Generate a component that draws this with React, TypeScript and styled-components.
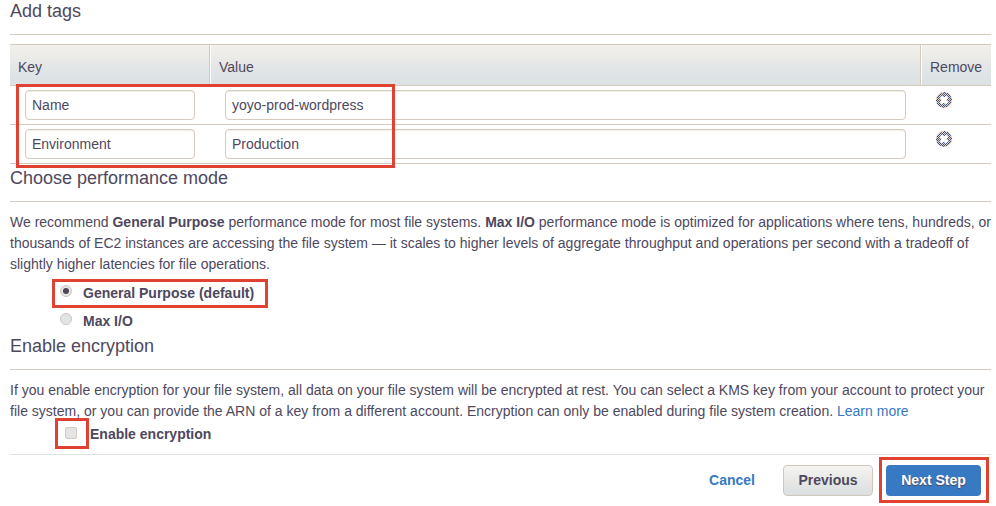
import React from "react";
import styled, { createGlobalStyle, css } from "styled-components";

const Global = createGlobalStyle`
  *, *::before, *::after { box-sizing: border-box; }
  body {
    margin: 0;
    background: #fff;
    color: #4e485e;
    font: 14px/21px "Liberation Sans", Arial, sans-serif;
    overflow: hidden;
  }
`;

const line = "#d6cabc";

const Page = styled.main`
  width: 996px;
  height: 506px;
  padding: 0 5px 0 10px;
  background: #fff;
  white-space: nowrap;
`;

const Heading = styled.h2<{ $height: number; $lineHeight: number }>`
  height: ${(p) => p.$height}px;
  margin: 0;
  border-bottom: 1px solid ${line};
  font-size: 18px;
  font-weight: 400;
  line-height: ${(p) => p.$lineHeight}px;
`;

/* Red frame drawn over a part of the form. */
const Highlight = styled.span<{ $x: number; $y: number; $w: number; $h: number }>`
  position: absolute;
  left: ${(p) => p.$x}px;
  top: ${(p) => p.$y}px;
  width: ${(p) => p.$w}px;
  height: ${(p) => p.$h}px;
  border: 3px solid #df4230;
  pointer-events: none;
`;

const Table = styled.div`
  position: relative;
  margin-top: 9px;
  border-top: 1px solid ${line};
`;

const columns = css`
  display: grid;
  grid-template-columns: 200px 711px 70px;
  border-bottom: 1px solid ${line};
`;

const HeadRow = styled.div`
  ${columns}
  height: 41px;
  background: linear-gradient(#f1f0ed, #ebebe8 30%, #dee3e6 75%, #dde1e2);
`;

const HeadCell = styled.div`
  padding: 12px 0 0 8px;
  border-left: 1px solid #fff;
  border-right: 1px solid ${line};
  &:first-child { border-left: 0; }
  &:last-child { border-right: 0; }
`;

const Row = styled.div`
  ${columns}
  height: 39px;
`;

const Cell = styled.div`
  padding: 4px 15px 0;
`;

const Field = styled.input`
  display: block;
  width: 100%;
  height: 30px;
  padding: 0 6px;
  border: 1px solid ${line};
  border-radius: 4px;
  outline: 0;
  background: #fff;
  box-shadow: inset 0 1px 1px #f0efec;
  color: inherit;
  font: inherit;
`;

const RemoveButton = styled.button`
  display: block;
  width: 18px;
  height: 18px;
  margin: 5px 0 0 14px;
  padding: 0;
  border: 0;
  background: none;
  svg { display: block; }
`;

const Paragraph = styled.p`
  margin: 10px 0 0;
`;

const TextLine = styled.span<{ $spacing?: number }>`
  display: block;
  letter-spacing: ${(p) => p.$spacing ?? 0}px;
`;

const Link = styled.a`
  color: #3779c2;
  text-decoration: none;
`;

const Options = styled.div`
  position: relative;
  height: 56px;
  padding: 4px 0 0 50px;
`;

const Option = styled.label`
  display: flex;
  height: 28px;
  gap: 11px;
  font-weight: 700;
  line-height: 28px;
`;

const EncryptionOption = styled(Option)`
  position: relative;
  height: 33px;
  padding-left: 55px;
  gap: 13px;
  line-height: 25px;
  border-bottom: 1px solid #dde2e4;
`;

const RadioMark = styled.span`
  display: grid;
  place-items: center;
  width: 12px;
  height: 12px;
  margin-top: 6px;
  border: 1px solid #cfc6ba;
  border-radius: 50%;
  background: #e2e5e5;
`;

const Dot = styled.span`
  width: 6px;
  height: 6px;
  border-radius: 50%;
  background: #514454;
`;

const CheckMark = styled.span`
  width: 12px;
  height: 12px;
  margin-top: 5px;
  border: 1px solid #d3c9bd;
  border-radius: 2px;
  background: #e3e5e5;
`;

const Actions = styled.footer`
  position: relative;
  display: flex;
  justify-content: flex-end;
  align-items: center;
  padding: 10px 10px 0 0;
`;

const Button = styled.button<{ $kind: "link" | "plain" | "primary" }>`
  height: 31px;
  padding: 0;
  border: 0;
  border-radius: 4px;
  font: 700 14px/29px "Liberation Sans", Arial, sans-serif;
  ${(p) =>
    p.$kind === "link" &&
    css`
      width: 48px;
      margin-right: 27px;
      background: none;
      color: #3779c2;
    `}
  ${(p) =>
    p.$kind === "plain" &&
    css`
      width: 90px;
      margin-right: 13px;
      border: 1px solid #d1c7bb;
      background: linear-gradient(#f5f4f2, #e8e8e6 50%, #dadfe1);
      color: #4e485e;
    `}
  ${(p) =>
    p.$kind === "primary" &&
    css`
      width: 95px;
      background: #3779c2;
      color: #fff;
      text-shadow: 0 1px 1px #52445a;
    `}
`;

/* Dark cells of the checkered disc: every second cell inside the radius. */
const discCells = Array.from({ length: 324 }, (_, i) => ({ x: i % 18, y: Math.floor(i / 18) })).filter(
  ({ x, y }) => (x + y) % 2 === 0 && Math.hypot(x - 8.5, y - 8.5) < 7.6,
);

const RemoveIcon = () => (
  <svg width="18" height="18" viewBox="0 0 18 18">
    <circle cx="9" cy="9" r="8.3" fill="#dcd5cc" />
    <g shapeRendering="crispEdges">
      {discCells.map(({ x, y }) => (
        <rect key={`${x}-${y}`} x={x} y={y} width="1" height="1" fill={(x + 2 * y) % 5 === 0 ? "#3779c2" : "#4e455f"} />
      ))}
    </g>
    <path d="M5.8 5.8l6.4 6.4M12.2 5.8l-6.4 6.4" stroke="#fff" strokeWidth="3.4" />
  </svg>
);

const tags = [
  { key: "Name", value: "yoyo-prod-wordpress" },
  { key: "Environment", value: "Production" },
];

export default function App() {
  return (
    <>
      <Global />
      <Page>
        <Heading $height={35} $lineHeight={23}>Add tags</Heading>
        <Table>
          <HeadRow>
            <HeadCell>Key</HeadCell>
            <HeadCell>Value</HeadCell>
            <HeadCell>Remove</HeadCell>
          </HeadRow>
          {tags.map((tag) => (
            <Row key={tag.key}>
              <Cell><Field defaultValue={tag.key} /></Cell>
              <Cell><Field defaultValue={tag.value} /></Cell>
              <RemoveButton aria-label="Remove tag"><RemoveIcon /></RemoveButton>
            </Row>
          ))}
          <Highlight $x={6} $y={39} $w={379} $h={84} />
        </Table>
        <Heading $height={38} $lineHeight={28}>Choose performance mode</Heading>
        <Paragraph>
          <TextLine>
            We recommend <b>General Purpose</b> performance mode for most file systems. <b>Max I/O</b> performance
            mode is optimized for applications where tens, hundreds, or
          </TextLine>
          <TextLine>
            thousands of EC2 instances are accessing the file system — it scales to higher levels of aggregate
            throughput and operations per second with a tradeoff of
          </TextLine>
          <TextLine>slightly higher latencies for file operations.</TextLine>
        </Paragraph>
        <Options>
          <Option><RadioMark><Dot /></RadioMark>General Purpose (default)</Option>
          <Option><RadioMark />Max I/O</Option>
          <Highlight $x={42} $y={4} $w={216} $h={29} />
        </Options>
        <Heading $height={39} $lineHeight={30}>Enable encryption</Heading>
        <Paragraph>
          <TextLine $spacing={0.006}>
            If you enable encryption for your file system, all data on your file system will be encrypted at rest. You
            can select a KMS key from your account to protect your
          </TextLine>
          <TextLine $spacing={0.006}>
            file system, or you can provide the ARN of a key from a different account. Encryption can only be enabled
            during file system creation. <Link>Learn more</Link>
          </TextLine>
        </Paragraph>
        <EncryptionOption>
          <CheckMark />Enable encryption
          <Highlight $x={45} $y={-4} $w={34} $h={31} />
        </EncryptionOption>
        <Actions>
          <Button $kind="link">Cancel</Button>
          <Button $kind="plain">Previous</Button>
          <Button $kind="primary">Next Step</Button>
          <Highlight $x={869} $y={2} $w={110} $h={46} />
        </Actions>
      </Page>
    </>
  );
}
